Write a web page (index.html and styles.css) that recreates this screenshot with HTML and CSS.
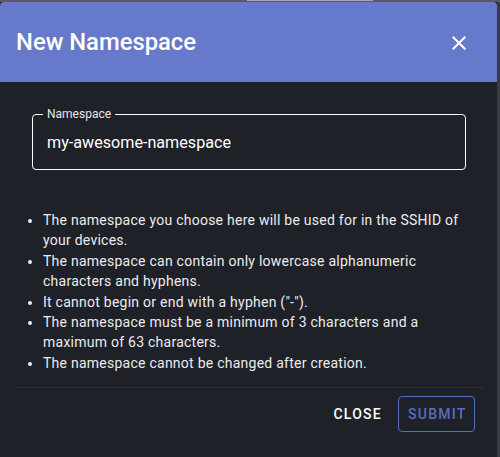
FILE: index.html
```html
<!DOCTYPE html>
<html>
<head>
<meta charset="utf-8">
<link rel="stylesheet" href="styles.css">
</head>
<body>
<div class="topbar"><div class="topbar-tab"></div></div>
<div class="dialog">
  <div class="header">
    <h1 class="title">New Namespace</h1>
    <button class="close-icon" aria-label="close">
      <svg width="24" height="24" viewBox="0 0 24 24"><path d="M19 6.41 17.59 5 12 10.59 6.41 5 5 6.41 10.59 12 5 17.59 6.41 19 12 13.41 17.59 19 19 17.59 13.41 12z" fill="#fff"/></svg>
    </button>
  </div>
  <div class="content">
    <div class="field">
      <span class="field-label">Namespace</span>
      <div class="field-value">my-awesome-namespace</div>
    </div>
    <ul class="rules">
      <li>The namespace you choose here will be used for in the SSHID of your devices.</li>
      <li>The namespace can contain only lowercase alphanumeric characters and hyphens.</li>
      <li>It cannot begin or end with a hyphen ("-").</li>
      <li>The namespace must be a minimum of 3 characters and a maximum of 63 characters.</li>
      <li>The namespace cannot be changed after creation.</li>
    </ul>
  </div>
  <div class="divider"></div>
  <div class="actions">
    <button class="btn btn-text">Close</button>
    <button class="btn btn-outlined">Submit</button>
  </div>
</div>
</body>
</html>
```
FILE: styles.css
```css
html, body {
  margin: 0;
  padding: 0;
  height: 457px;
  overflow: hidden;
}
body {
  font-family: Roboto, "Liberation Sans", sans-serif;
  background: linear-gradient(to right, #1f2129 0, #1f2129 497px, #3a3c44 497px);
}
.topbar {
  height: 2px;
  background: #5b5b5e;
  position: relative;
}
.topbar-tab {
  position: absolute;
  left: 247px;
  width: 126px;
  top: 0;
  height: 1px;
  background: #a9a9b3;
}
.dialog {
  width: 497px;
  background: #1f2129;
  border-radius: 4px 4px 0 0;
  overflow: hidden;
}
.header {
  height: 80px;
  background: #6779ca;
  display: flex;
  align-items: center;
  justify-content: space-between;
  padding: 0 26px 0 16px;
}
.title {
  margin: 0;
  color: #fff;
  font-size: 23.8px;
  font-weight: 500;
  letter-spacing: 0;
}
.close-icon {
  background: none;
  border: 0;
  padding: 0;
  width: 24px;
  height: 24px;
  display: flex;
  margin-top: 1px;
}
.content {
  padding: 32px 31px 0 32px;
}
.field {
  position: relative;
  border: 1px solid #ffffff;
  border-radius: 4px;
  padding: 0 14px;
  height: 56px;
  box-sizing: border-box;
  display: flex;
  align-items: center;
}
.field-label {
  position: absolute;
  left: 10px;
  top: -8px;
  background: #1f2129;
  color: #e6e6e6;
  font-size: 12px;
  line-height: 14px;
  padding: 0 4px;
}
.field-value {
  color: #ffffff;
  font-size: 16.15px;
  line-height: 19px;
  padding-top: 1px;
}
.rules {
  margin: 40px 0 0 0;
  padding: 0 0 0 11px;
  color: #ececec;
  font-size: 14px;
  line-height: 20.4px;
  letter-spacing: 0.25px;
}
.divider {
  height: 1px;
  background: #30323a;
  margin: 14px 14px 0 15px;
}
.actions {
  display: flex;
  justify-content: flex-end;
  align-items: center;
  gap: 8px;
  padding: 8px 22px 0 0;
}
.btn {
  font-family: Roboto, "Liberation Sans", sans-serif;
  font-size: 14px;
  font-weight: 500;
  letter-spacing: 1.25px;
  text-transform: uppercase;
  background: none;
  height: 36px;
  border-radius: 4px;
  padding: 0 8px;
}
.btn-text {
  border: 0;
  color: #ffffff;
}
.btn-outlined {
  border: 1px solid #5b6cbf;
  color: #5b6cbf;
  padding: 0 9px;
  width: 77px;
}
```
